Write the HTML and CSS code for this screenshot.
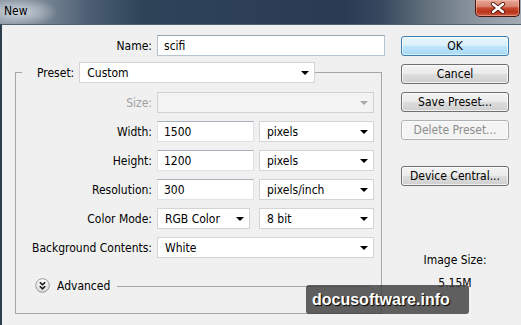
FILE: index.html
```html
<!DOCTYPE html>
<html>
<head>
<meta charset="utf-8">
<link rel="stylesheet" href="styles.css">
</head>
<body>
<div class="window">
  <div class="titlebar">
    <span class="title">New</span>
    <div class="close">
      <svg width="16" height="12" viewBox="0 0 16 12"><path d="M3 2 L13 10 M13 2 L3 10" stroke="#5a1a10" stroke-width="4.2" stroke-linecap="round"/><path d="M3 2 L13 10 M13 2 L3 10" stroke="#ffffff" stroke-width="2.4" stroke-linecap="round"/></svg>
    </div>
  </div>
  <div class="dialog">
    <div class="form">
      <div class="row name-row">
        <span class="lbl name-lbl">Name:</span>
        <div class="field input name-input">scifi</div>
      </div>
      <fieldset class="group">
        <legend class="legend">
          <span class="legend-lbl">Preset:</span>
          <div class="field select preset">Custom<i class="arrow"></i></div>
        </legend>
        <div class="rows">
          <div class="row"><span class="lbl disabled">Size:</span><div class="field select w-full is-disabled"><i class="arrow"></i></div></div>
          <div class="row"><span class="lbl">Width:</span><div class="field input w-num">1500</div><div class="field select w-unit">pixels<i class="arrow"></i></div></div>
          <div class="row"><span class="lbl">Height:</span><div class="field input w-num">1200</div><div class="field select w-unit">pixels<i class="arrow"></i></div></div>
          <div class="row"><span class="lbl">Resolution:</span><div class="field input w-num">300</div><div class="field select w-unit">pixels/inch<i class="arrow"></i></div></div>
          <div class="row"><span class="lbl">Color Mode:</span><div class="field select w-mode">RGB Color<i class="arrow"></i></div><div class="field select w-unit mode-unit">8 bit<i class="arrow"></i></div></div>
          <div class="row"><span class="lbl">Background Contents:</span><div class="field select w-full">White<i class="arrow"></i></div></div>
        </div>
        <div class="advanced">
          <svg class="adv-icon" width="15" height="15" viewBox="0 0 15 15">
            <defs><linearGradient id="g" x1="0" y1="0" x2="0" y2="1"><stop offset="0" stop-color="#ffffff"/><stop offset="1" stop-color="#d6d6d6"/></linearGradient></defs>
            <circle cx="7.5" cy="7.5" r="6.8" fill="url(#g)" stroke="#9a9a9a" stroke-width="1"/>
            <path d="M4.8 4.3 L7.5 6.8 L10.2 4.3 M4.8 8.2 L7.5 10.7 L10.2 8.2" fill="none" stroke="#111" stroke-width="1.5"/>
          </svg>
          <span class="adv-text">Advanced</span>
          <span class="adv-line"></span>
        </div>
      </fieldset>
    </div>
    <div class="side">
      <div class="btn default">OK</div>
      <div class="btn">Cancel</div>
      <div class="btn">Save Preset...</div>
      <div class="btn is-disabled">Delete Preset...</div>
      <div class="btn device">Device Central...</div>
      <div class="imgsize">Image Size:</div>
      <div class="imgval">5.15M</div>
    </div>
  </div>
  <div class="watermark">docusoftware.info</div>
</div>
</body>
</html>
```
FILE: styles.css
```css
* { box-sizing: border-box; }
html, body { margin: 0; padding: 0; }
body {
  width: 521px;
  height: 325px;
  overflow: hidden;
  font-family: "DejaVu Sans Condensed", "DejaVu Sans", sans-serif;
  font-size: 12px;
  color: #000;
  background: #f0f0f0;
}
.window {
  position: relative;
  width: 521px;
  height: 325px;
  display: flex;
  flex-direction: column;
}
.titlebar {
  height: 24px;
  flex: none;
  display: flex;
  justify-content: space-between;
  align-items: flex-start;
  background:
    radial-gradient(ellipse 40px 14px at 18px 12px, rgba(235,240,245,0.75), rgba(235,240,245,0) 100%),
    linear-gradient(90deg, #8a96a2 0, #7d8a97 40px, #4a5d73 90px, #2f4359 140px, #2c3f56 250px, #283b52 340px, #34475d 380px, #66747f 430px, #8e98a2 480px, #a2abb3 521px);
}
.title {
  padding-left: 4px;
  line-height: 22px;
  font-size: 12px;
  color: #000;
}
.close {
  width: 45px;
  height: 17px;
  margin-right: 1px;
  border: 1px solid #4a1610;
  border-top: none;
  border-radius: 0 0 5px 5px;
  background: linear-gradient(#e7a898 0, #d9836f 40%, #c44a2f 50%, #b8331a 75%, #d06446 100%);
  box-shadow: inset 0 0 0 1px rgba(255,200,190,0.45);
  display: flex;
  align-items: center;
  justify-content: center;
}
.dialog {
  flex: 1;
  display: flex;
  background: #f0f0f0;
  border-left: 2px solid #2f3e4f;
  border-top: 1px solid #55636f;
}
.form {
  width: 383px;
  flex: none;
}
.row {
  display: flex;
  align-items: center;
  height: 21px;
}
.name-row {
  margin-top: 10px;
}
.lbl {
  width: 155px;
  text-align: right;
  padding-right: 5px;
  white-space: nowrap;
}
.lbl.disabled { color: #a0a0a0; }
.field {
  height: 21px;
  background: #fff;
  display: flex;
  align-items: center;
  justify-content: space-between;
  white-space: nowrap;
}
.input {
  border: 1px solid #dfe3e8;
  border-top-color: #a9b1ba;
  padding-left: 6px;
}
.name-input {
  width: 228px;
  border-color: #b6c4d2;
  border-top-color: #8ea4ba;
}
.select {
  border: 1px solid #d4d4d4;
  padding-left: 7px;
  padding-right: 5px;
}
.arrow {
  width: 0;
  height: 0;
  margin-left: auto;
  border-left: 4px solid transparent;
  border-right: 4px solid transparent;
  border-top: 4px solid #000;
}
.select.is-disabled {
  background: #f3f3f3;
  border-color: #d2d2d2;
}
.select.is-disabled .arrow { border-top-color: #a8a8a8; }
.group {
  margin: 6px 0 0 13px;
  width: 367px;
  height: 252px;
  padding: 9px 7px 0 0;
  border: 1px solid #a6a6a6;
}
.legend {
  display: flex;
  align-items: center;
  margin-left: 6px;
  padding: 0 0 0 15px;
}
.legend-lbl {
  padding-right: 5px;
}
.preset { width: 236px; }
.rows {
  display: flex;
  flex-direction: column;
  gap: 8px;
}
.rows .lbl { width: 141px; }
.w-full { width: 217px; }
.w-num { width: 97px; }
.w-unit { width: 115px; margin-left: 5px; }
.w-mode { width: 93px; }
.mode-unit { margin-left: 9px; }
.advanced {
  display: flex;
  align-items: center;
  margin-top: 20px;
  padding-left: 19px;
}
.adv-icon { flex: none; }
.adv-text { margin-left: 7px; }
.adv-line {
  height: 1px;
  background: #a6a6a6;
  width: 253px;
  margin-left: 7px;
  margin-top: 1px;
}
.side {
  margin-left: 16px;
  width: 108px;
  display: flex;
  flex-direction: column;
  align-items: stretch;
  padding-top: 11px;
}
.btn {
  height: 20px;
  margin-bottom: 8px;
  border: 1px solid #707070;
  border-radius: 3px;
  background: linear-gradient(#f3f3f3 0, #ebebeb 48%, #dddddd 52%, #cfcfcf 100%);
  box-shadow: inset 0 0 0 1px rgba(255,255,255,0.7);
  display: flex;
  align-items: center;
  justify-content: center;
  white-space: nowrap;
}
.btn.default {
  border-color: #3c7fb1;
  background: linear-gradient(#eaf6fd 0, #d9f0fc 48%, #bee6fd 52%, #a7d9f5 100%);
  box-shadow: inset 0 0 0 1px rgba(255,255,255,0.6);
}
.btn.is-disabled {
  border-color: #adb2b5;
  background: #f4f4f4;
  color: #8d8d8d;
}
.btn.device { margin-top: 18px; }
.imgsize {
  margin-top: 59px;
  text-align: center;
  line-height: 15px;
}
.imgval {
  margin-top: 8px;
  text-align: center;
  line-height: 15px;
}
.watermark {
  position: absolute;
  left: 306px;
  top: 285px;
  width: 163px;
  height: 29px;
  border-radius: 3px;
  background: rgba(62,62,62,0.82);
  color: #fff;
  font-family: "Liberation Sans", Arial, sans-serif;
  font-weight: bold;
  font-size: 16px;
  line-height: 29px;
  padding-left: 6px;
  text-shadow: 1px 1px 1px #000;
}
```
